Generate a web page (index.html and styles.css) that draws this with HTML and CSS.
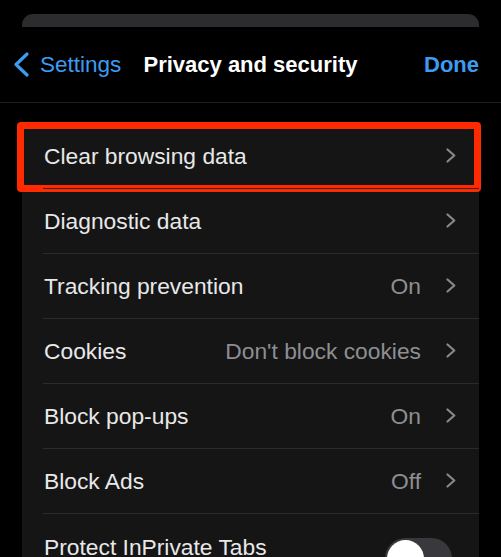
FILE: index.html
```html
<!DOCTYPE html>
<html lang="en">
<head>
    <meta charset="UTF-8">
    <meta name="viewport" content="width=device-width, initial-scale=1.0">
    <title>Privacy and security</title>
    <link rel="stylesheet" href="styles.css">
</head>
<body>

    <!-- Sheet behind the current one -->
    <div class="sheet-edge"></div>

    <header class="nav">
        <a class="back" href="#">
            <svg width="16" height="25" viewBox="0 0 16 25">
                <path d="M14 2 L3 12.5 L14 23" fill="none" stroke="#3d9cf2" stroke-width="3.2" stroke-linecap="round" stroke-linejoin="round"/>
            </svg>
            <span>Settings</span>
        </a>
        <h1 class="title">Privacy and security</h1>
        <a class="done" href="#">Done</a>
    </header>

    <ul class="list">
        <li class="row highlighted">
            <span class="label">Clear browsing data</span>
            <svg class="chevron" width="10" height="15" viewBox="0 0 10 15"><path d="M1.5 1.5 L8.3 7.5 L1.5 13.5"/></svg>
        </li>
        <li class="row">
            <span class="label">Diagnostic data</span>
            <svg class="chevron" width="10" height="15" viewBox="0 0 10 15"><path d="M1.5 1.5 L8.3 7.5 L1.5 13.5"/></svg>
        </li>
        <li class="row">
            <span class="label">Tracking prevention</span>
            <span class="value">On</span>
            <svg class="chevron" width="10" height="15" viewBox="0 0 10 15"><path d="M1.5 1.5 L8.3 7.5 L1.5 13.5"/></svg>
        </li>
        <li class="row">
            <span class="label">Cookies</span>
            <span class="value">Don't block cookies</span>
            <svg class="chevron" width="10" height="15" viewBox="0 0 10 15"><path d="M1.5 1.5 L8.3 7.5 L1.5 13.5"/></svg>
        </li>
        <li class="row">
            <span class="label">Block pop-ups</span>
            <span class="value">On</span>
            <svg class="chevron" width="10" height="15" viewBox="0 0 10 15"><path d="M1.5 1.5 L8.3 7.5 L1.5 13.5"/></svg>
        </li>
        <li class="row">
            <span class="label">Block Ads</span>
            <span class="value">Off</span>
            <svg class="chevron" width="10" height="15" viewBox="0 0 10 15"><path d="M1.5 1.5 L8.3 7.5 L1.5 13.5"/></svg>
        </li>
        <li class="row row-toggle">
            <span class="label">Protect InPrivate Tabs</span>
            <span class="switch"><span class="knob"></span></span>
        </li>
    </ul>

</body>
</html>
```

FILE: styles.css
```css
/* Dark iOS style settings page */
body {
    margin: 0;
    height: 557px;
    overflow: hidden;
    background-color: #000;
    font-family: "Liberation Sans", Arial, sans-serif;
    font-size: 22.8px;
    color: #e8e8e8;
}
.sheet-edge {
    height: 13px;
    margin: 14px 22px 0;
    background-color: #2c2c2e;
    border-radius: 11px 11px 0 0;
}
.nav {
    display: grid;
    grid-template-columns: 1fr auto 1fr;
    align-items: center;
    height: 75px;
    padding: 0 22px;
    border-bottom: 1px solid #1c1c1e;
}
.back {
    display: flex;
    align-items: center;
    gap: 11px;
    margin-left: -9px;
    color: #3d9cf2;
    text-decoration: none;
    font-size: 22.5px;
}
.back svg {
    display: block;
}
.title {
    margin: 0;
    font-size: 22px;
    font-weight: bold;
    color: #fff;
}
.done {
    justify-self: end;
    color: #3d9cf2;
    font-size: 22px;
    font-weight: bold;
    text-decoration: none;
}
.list {
    list-style: none;
    margin: 20px 22px 0;
    padding: 0;
    background-color: #151515;
}
.row {
    position: relative;
    display: flex;
    align-items: center;
    height: 65px;
    padding: 0 23px 0 22px;
    line-height: 26px;
}
.row + .row::before {
    content: "";
    position: absolute;
    top: 0;
    left: 21px;
    right: 0;
    border-top: 1px solid #2b2b2d;
}
.label {
    flex: 1;
}
.value {
    color: #8e8e92;
    margin-right: 25px;
}
.chevron {
    display: block;
    fill: none;
    stroke: #88888c;
    stroke-width: 2.2;
    stroke-linecap: round;
    stroke-linejoin: round;
}
/* Red annotation box around the first row */
.highlighted::after {
    content: "";
    position: absolute;
    top: -1px;
    left: -5px;
    right: -2px;
    bottom: -4px;
    border: 7px solid #ff2a00;
    border-radius: 4px;
}
.row-toggle {
    align-items: flex-start;
    height: auto;
    padding-top: 21px;
    padding-right: 27px;
}
.switch {
    position: relative;
    width: 67px;
    height: 41px;
    margin-top: 4px;
    background-color: #39393d;
    border-radius: 21px;
}
.knob {
    position: absolute;
    top: 2px;
    left: 2px;
    width: 37px;
    height: 37px;
    background-color: #fff;
    border-radius: 50%;
}
```
